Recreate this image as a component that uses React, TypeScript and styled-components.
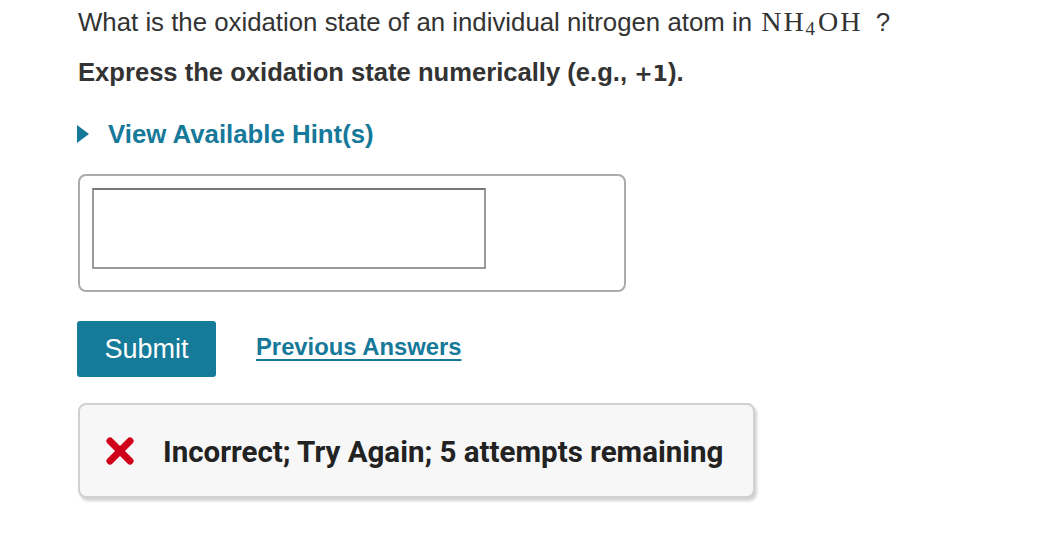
import React from "react";
import styled, { createGlobalStyle } from "styled-components";

const Global = createGlobalStyle`
  html, body { margin: 0; padding: 0; background: #fff; }
  body { font-family: "Liberation Sans", Arial, sans-serif; color: #333; }
`;

const Page = styled.div`
  width: 1038px;
  height: 540px;
  box-sizing: border-box;
  padding: 5px 0 0 78px;
  display: flex;
  flex-direction: column;
`;

const Question = styled.p`
  margin: 0;
  font-size: 25.8px;
  line-height: 34px;
  color: #333;
`;

const Chem = styled.span`
  font-family: "Liberation Serif", "Times New Roman", serif;
  font-size: 28px;
  letter-spacing: 2px;
  margin: 0 6px 0 2px;
  sub {
    font-size: 19px;
    vertical-align: -4px;
    line-height: 0;
    margin-right: 1px;
  }
`;

const Instruction = styled.p`
  margin: 18px 0 0;
  font-size: 25.6px;
  line-height: 30px;
  font-weight: bold;
  color: #333;
`;

const Mono = styled.span`
  font-family: "DejaVu Sans", sans-serif;
  font-size: 22px;
`;

const HintToggle = styled.div`
  margin-top: 30px;
  display: flex;
  align-items: center;
  gap: 19px;
  color: #16799a;
  font-weight: bold;
  font-size: 25.8px;
  line-height: 30px;
  margin-left: -1px;
`;

const Triangle = styled.span`
  width: 0;
  height: 0;
  border-top: 9px solid transparent;
  border-bottom: 9px solid transparent;
  border-left: 12px solid #16799a;
`;

const AnswerCard = styled.div`
  margin-top: 25px;
  width: 548px;
  height: 118px;
  box-sizing: border-box;
  border: 2px solid #ababab;
  border-radius: 8px;
  padding: 12px 0 0 12px;
`;

const AnswerInput = styled.div`
  width: 394px;
  height: 81px;
  box-sizing: border-box;
  border: 2px solid #999;
  border-top-color: #777;
`;

const Actions = styled.div`
  margin-top: 29px;
  display: flex;
  align-items: center;
  gap: 40px;
  margin-left: -1px;
`;

const SubmitButton = styled.button`
  width: 139px;
  height: 56px;
  border: none;
  border-radius: 3px;
  background: #167a99;
  color: #fff;
  font-family: "Liberation Sans", Arial, sans-serif;
  font-size: 27px;
  padding: 0;
  padding-top: 1px;
`;

const PrevLink = styled.a`
  color: #16799a;
  font-weight: bold;
  font-size: 23.8px;
  text-decoration: underline;
  text-underline-offset: 4px;
  text-decoration-thickness: 2px;
  margin-top: -4px;
`;

const Feedback = styled.div`
  margin-top: 26px;
  width: 677px;
  height: 95px;
  box-sizing: border-box;
  border: 2px solid #d0d0d0;
  border-radius: 8px;
  background: #f7f7f7;
  box-shadow: 2px 3px 3px rgba(0, 0, 0, 0.18);
  display: flex;
  align-items: center;
  padding: 0 0 0 25px;
  gap: 28px;
`;

const FeedbackText = styled.span`
  font-family: Roboto, "Liberation Sans", sans-serif;
  font-weight: bold;
  font-size: 29.5px;
  color: #222;
  margin-top: 3px;
`;

const CrossIcon = () => (
  <svg width="30" height="30" viewBox="0 0 30 30">
    <path
      d="M5 5 L25 25 M25 5 L5 25"
      stroke="#d0021b"
      strokeWidth="7"
      strokeLinecap="round"
    />
  </svg>
);

export default function App() {
  return (
    <>
      <Global />
      <Page>
        <Question>
          What is the oxidation state of an individual nitrogen atom in{" "}
          <Chem>
            NH<sub>4</sub>OH
          </Chem>{" "}
          ?
        </Question>
        <Instruction>
          Express the oxidation state numerically (e.g., <Mono>+1</Mono>).
        </Instruction>
        <HintToggle>
          <Triangle />
          <span>View Available Hint(s)</span>
        </HintToggle>
        <AnswerCard>
          <AnswerInput />
        </AnswerCard>
        <Actions>
          <SubmitButton>Submit</SubmitButton>
          <PrevLink>Previous Answers</PrevLink>
        </Actions>
        <Feedback>
          <CrossIcon />
          <FeedbackText>Incorrect; Try Again; 5 attempts remaining</FeedbackText>
        </Feedback>
      </Page>
    </>
  );
}
